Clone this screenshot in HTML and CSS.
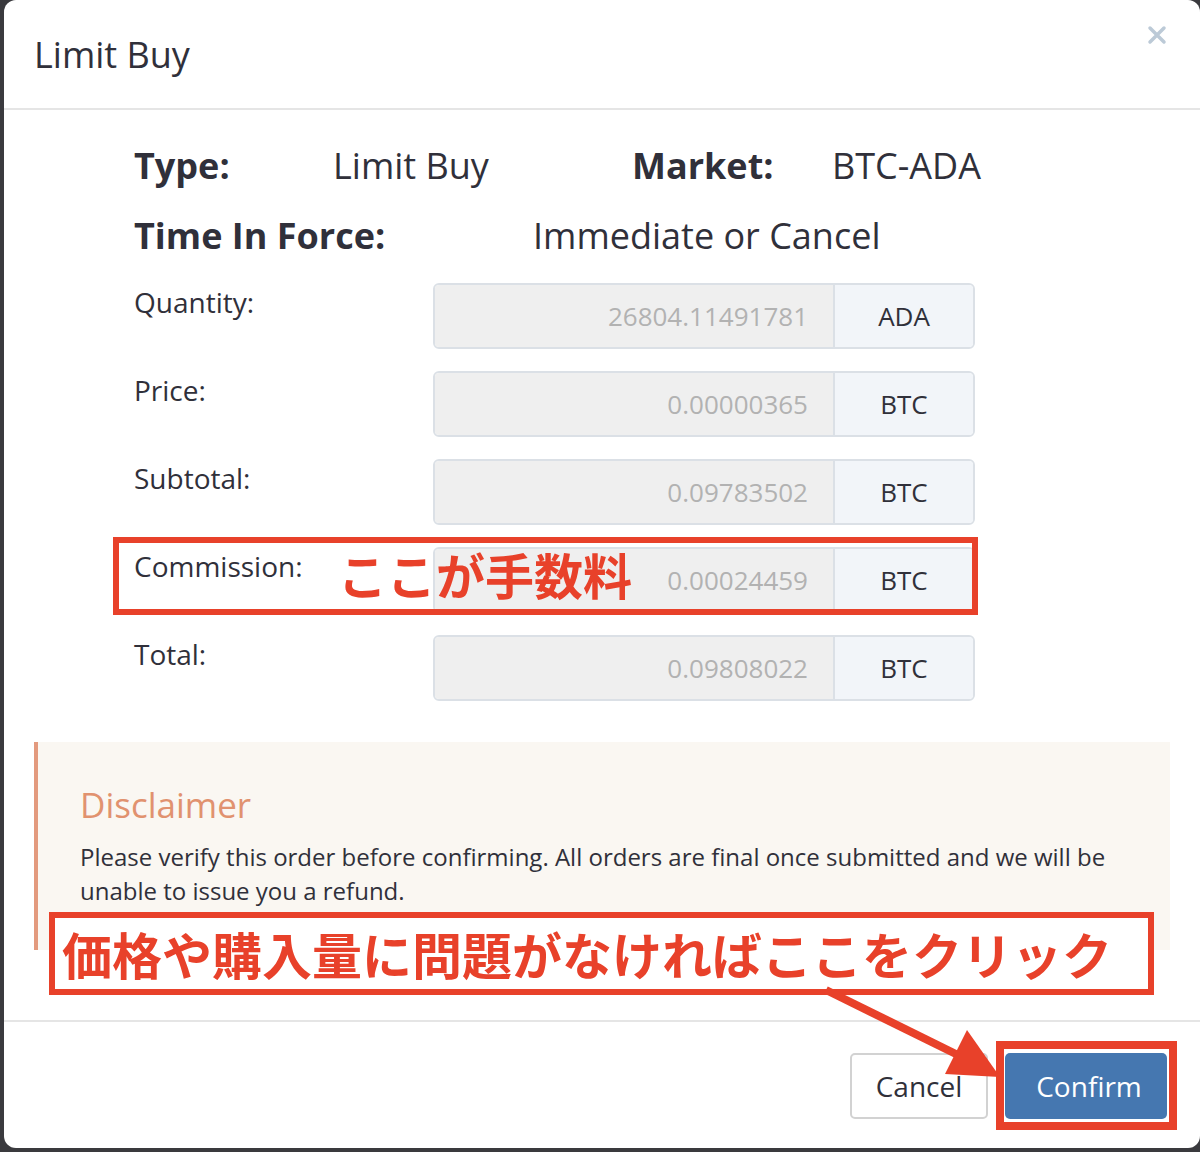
FILE: index.html
```html
<!DOCTYPE html>
<html lang="ja">
<head>
    <meta charset="UTF-8">
    <meta name="viewport" content="width=device-width, initial-scale=1.0">
    <title>Limit Buy</title>
    <link rel="stylesheet" href="styles.css">
</head>
<body>
    <div class="modal">
        <!-- Cabecera -->
        <div class="modal-header">
            <h4 class="modal-title">Limit Buy</h4>
            <span class="close">
                <svg width="20" height="20" viewBox="0 0 20 20">
                    <path d="M3 3 L17 17 M17 3 L3 17" stroke="#bccad7" stroke-width="3.5" stroke-linecap="round"/>
                </svg>
            </span>
        </div>

        <div class="modal-body">
            <div class="order-info">
                <div class="info-row">
                    <span class="info-label type-label">Type:</span>
                    <span class="info-value type-value">Limit Buy</span>
                    <span class="info-label market-label">Market:</span>
                    <span class="info-value">BTC-ADA</span>
                </div>
                <div class="info-row">
                    <span class="info-label tif-label">Time In Force:</span>
                    <span class="info-value">Immediate or Cancel</span>
                </div>

                <div class="form-row">
                    <label>Quantity:</label>
                    <div class="input-group">
                        <input type="text" value="26804.11491781" disabled>
                        <span class="addon">ADA</span>
                    </div>
                </div>
                <div class="form-row">
                    <label>Price:</label>
                    <div class="input-group">
                        <input type="text" value="0.00000365" disabled>
                        <span class="addon">BTC</span>
                    </div>
                </div>
                <div class="form-row">
                    <label>Subtotal:</label>
                    <div class="input-group">
                        <input type="text" value="0.09783502" disabled>
                        <span class="addon">BTC</span>
                    </div>
                </div>
                <div class="form-row">
                    <label>Commission:</label>
                    <div class="input-group">
                        <input type="text" value="0.00024459" disabled>
                        <span class="addon">BTC</span>
                    </div>
                </div>
                <div class="form-row">
                    <label>Total:</label>
                    <div class="input-group">
                        <input type="text" value="0.09808022" disabled>
                        <span class="addon">BTC</span>
                    </div>
                </div>
            </div>

            <!-- Aviso -->
            <div class="disclaimer">
                <h3>Disclaimer</h3>
                <p>Please verify this order before confirming. All orders are final once submitted and we will be unable to issue you a refund.</p>
            </div>
        </div>

        <div class="modal-footer">
            <button class="btn btn-cancel">Cancel</button>
            <button class="btn btn-confirm">Confirm</button>
        </div>

        <!-- Anotaciones -->
        <div class="note note-fee"><span>ここが手数料</span></div>
        <div class="note note-click"><span>価格や購入量に問題がなければここをクリック</span></div>
        <div class="note note-confirm"></div>
        <svg class="note-arrow" width="1196" height="1148" viewBox="0 0 1196 1148">
            <line x1="822" y1="990" x2="960" y2="1058" stroke="#e8412a" stroke-width="8"/>
            <polygon points="963,1030 941,1074 996,1077" fill="#e8412a"/>
        </svg>
    </div>
</body>
</html>
```

FILE: styles.css
```css
body {
    margin: 0;
    background-color: #3a3a3e;
    font-family: 'Open Sans', 'Liberation Sans', sans-serif;
    color: #30303a;
    overflow: hidden;
}

.modal {
    position: relative;
    width: 1196px;
    height: 1148px;
    margin-left: 4px;
    background-color: white;
    border-radius: 12px;
    display: flex;
    flex-direction: column;
}

.modal-header {
    height: 108px;
    border-bottom: 2px solid #e5e5e5;
    padding: 0 30px;
    display: flex;
    justify-content: space-between;
    align-items: flex-start;
}

.modal-title {
    margin: 0;
    padding-top: 32px;
    font-size: 36px;
    font-weight: normal;
    line-height: 46px;
}

.close {
    margin-top: 25px;
    margin-right: 3px;
}

.modal-body {
    padding: 30px 30px 0;
    height: 910px;
    box-sizing: border-box;
}

.order-info {
    padding-left: 100px;
}

.info-row {
    display: flex;
    height: 50px;
    align-items: center;
    font-size: 36px;
    margin-bottom: 20px;
}

.info-label {
    font-weight: bold;
}

.type-label {
    width: 199px;
}

.type-value {
    width: 299px;
}

.market-label {
    width: 200px;
}

.tif-label {
    width: 399px;
}

.info-row + .info-row {
    margin-bottom: 23px;
}

.form-row {
    display: flex;
    height: 66px;
    margin-bottom: 22px;
}

.form-row label {
    width: 299px;
    font-size: 28px;
    padding-top: 2px;
    line-height: 34px;
}

.input-group {
    display: flex;
    width: 542px;
    height: 66px;
    border: 2px solid #dbe0e6;
    border-radius: 6px;
    box-sizing: border-box;
    overflow: hidden;
}

.input-group input {
    width: 400px;
    border: none;
    border-right: 2px solid #dbe0e6;
    background-color: #efefef;
    text-align: right;
    font-family: inherit;
    font-size: 26px;
    color: #b2b2b2;
    padding: 0 25px 0 0;
    box-sizing: border-box;
}

.addon {
    flex: 1;
    background-color: #f2f5f9;
    font-size: 26px;
    display: flex;
    align-items: center;
    justify-content: center;
    color: #30303a;
}

.disclaimer {
    margin-top: 41px;
    height: 208px;
    box-sizing: border-box;
    background-color: #faf7f2;
    border-left: 4px solid #e39a7e;
    padding: 40px 42px 0;
}

.disclaimer h3 {
    margin: 0 0 12px;
    font-size: 35px;
    font-weight: normal;
    line-height: 46px;
    color: #e1926f;
}

.disclaimer p {
    margin: 0;
    font-size: 24px;
    line-height: 34px;
}

.modal-footer {
    border-top: 2px solid #e5e5e5;
    padding: 31px 33px 0 0;
    display: flex;
    justify-content: flex-end;
    gap: 17px;
}

.btn {
    height: 66px;
    font-family: inherit;
    font-size: 28px;
    border-radius: 5px;
}

.btn-cancel {
    width: 138px;
    background-color: white;
    border: 2px solid #d2d2d2;
    color: #30303a;
}

.btn-confirm {
    width: 162px;
    padding-left: 12px;
    background-color: #4577b0;
    border: none;
    color: white;
}

/* Anotaciones en rojo */
.note {
    position: absolute;
    box-sizing: border-box;
    border: 6px solid #e8412a;
    font-family: 'Noto Sans CJK JP', sans-serif;
    font-weight: bold;
    color: #e8412a;
}

.note-fee {
    left: 109px;
    top: 537px;
    width: 865px;
    height: 78px;
}

.note-fee span {
    position: absolute;
    left: 219px;
    top: -2px;
    font-size: 49px;
    line-height: 66px;
}

.note-click {
    left: 45px;
    top: 912px;
    width: 1105px;
    height: 83px;
    background-color: white;
    padding-left: 7px;
    font-size: 50px;
    line-height: 70px;
    white-space: nowrap;
}

.note-confirm {
    left: 992px;
    top: 1041px;
    width: 181px;
    height: 89px;
    border-width: 8px;
}

.note-arrow {
    position: absolute;
    left: 0;
    top: 0;
    pointer-events: none;
}
```
